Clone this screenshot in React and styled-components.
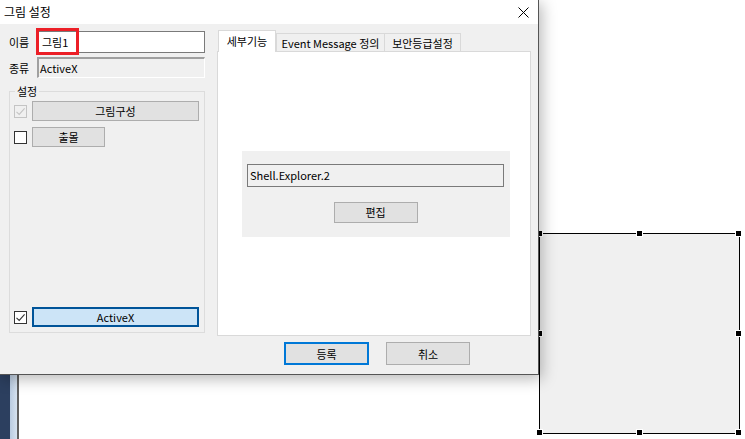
import React from 'react'
import styled, { createGlobalStyle, css } from 'styled-components'

const GlobalStyle = createGlobalStyle`
  html, body {
    margin: 0;
    background: #fff;
  }
  body {
    font-family: "Noto Sans CJK KR", "Noto Sans", sans-serif;
    font-size: 11px;
    color: #000;
  }
`;

const CheckMark = ({ color }) => (
  <svg width="11" height="11" viewBox="0 0 11 11">
    <path d="M1.5 5.8 L4.2 8.4 L9.6 2.4" fill="none" stroke={color} strokeWidth="1.1" />
  </svg>
);

const CloseIcon = () => (
  <svg width="11" height="11" viewBox="0 0 11 11">
    <path d="M0.5 0.5 L10.5 10.5 M10.5 0.5 L0.5 10.5" stroke="#000" strokeWidth="1" />
  </svg>
);

const CheckBox = ({ checked, disabled }) => (
  <Box $disabled={disabled}>
    {checked && <CheckMark color={disabled ? '#c4c4c4' : '#333'} />}
  </Box>
);

const handles = [
  [0, 0], [50, 0], [100, 0],
  [0, 50], [100, 50],
  [0, 100], [50, 100], [100, 100],
];

const App = () => {
  return (
    <>
      <GlobalStyle />
      <Desktop>
        <NavyStrip />
        <BlueEdge />
        <Canvas>
          <Selected>
            {handles.map(([x, y]) => (
              <Handle key={`${x}-${y}`} $x={x} $y={y} />
            ))}
          </Selected>
        </Canvas>

        <Dialog>
          <TitleBar>
            <Title>그림 설정</Title>
            <CloseButton><CloseIcon /></CloseButton>
          </TitleBar>
          <Body>
            <LeftColumn>
              <FieldRow>
                <Label>이름</Label>
                <NameField>
                  <TextBox $h={22}>그림1</TextBox>
                  <Highlight />
                </NameField>
              </FieldRow>
              <FieldRow $top={4}>
                <Label>종류</Label>
                <ReadOnlyBox>ActiveX</ReadOnlyBox>
              </FieldRow>
              <Group>
                <Legend>설정</Legend>
                <GroupBody>
                  <CheckRow>
                    <CheckBox checked disabled />
                    <Button $w={168}>그림구성</Button>
                  </CheckRow>
                  <CheckRow $top={6}>
                    <CheckBox />
                    <Button $w={73}>출몰</Button>
                  </CheckRow>
                  <CheckRow $bottom>
                    <CheckBox checked />
                    <Button $w={168} $variant="selected">ActiveX</Button>
                  </CheckRow>
                </GroupBody>
              </Group>
            </LeftColumn>

            <RightColumn>
              <Tabs>
                <Tab $active $w={58}>세부기능</Tab>
                <Tab $w={109}>Event Message 정의</Tab>
                <Tab $w={77} $joined>보안등급설정</Tab>
              </Tabs>
              <TabPanel>
                <InnerPanel>
                  <ProgBox>Shell.Explorer.2</ProgBox>
                  <Button $w={84} $h={21}>편집</Button>
                </InnerPanel>
              </TabPanel>
            </RightColumn>

            <Footer>
              <Button $w={85} $h={23} $variant="primary">등록</Button>
              <Button $w={84} $h={23}>취소</Button>
            </Footer>
          </Body>
        </Dialog>
      </Desktop>
    </>
  )
};

const Desktop = styled.div`
  position: relative;
  width: 745px;
  height: 439px;
  overflow: hidden;
  display: flex;
`;

const NavyStrip = styled.div`
  width: 10px;
  background: #2c3f5f;
`;

const BlueEdge = styled.div`
  width: 7px;
  background: linear-gradient(90deg, #b9cbe0, #d6e2ef);
  border-right: 2px solid #606060;
`;

const Canvas = styled.div`
  position: relative;
  flex: 1;
  background: #fff;
`;

const Selected = styled.div`
  position: absolute;
  left: 520px;
  top: 233px;
  width: 201px;
  height: 201px;
  box-sizing: border-box;
  border: 1px solid #000;
  background: #f0f0f0;
`;

const Handle = styled.div`
  position: absolute;
  left: ${p => `calc(${p.$x}% - 4px)`};
  top: ${p => `calc(${p.$y}% - 4px)`};
  width: 5px;
  height: 5px;
  background: #000;
  border: 1px solid #fff;
`;

const Dialog = styled.div`
  position: absolute;
  left: -1px;
  top: -1px;
  z-index: 2;
  width: 540px;
  height: 376px;
  box-sizing: border-box;
  border: 1px solid #555;
  background: #f0f0f0;
  box-shadow: 3px 4px 14px rgba(0, 0, 0, 0.28);
  display: flex;
  flex-direction: column;
`;

const TitleBar = styled.div`
  height: 24px;
  background: #fff;
  display: flex;
  align-items: center;
  justify-content: space-between;
  padding: 0 9px 0 4px;
`;

const Title = styled.span`
  font-size: 12px;
  line-height: 14px;
`;

const CloseButton = styled.div`
  display: flex;
  align-items: center;
`;

const Body = styled.div`
  flex: 1;
  display: grid;
  grid-template-columns: 196px 314px;
  grid-template-rows: auto 1fr;
  column-gap: 12px;
  padding: 0 8px 0 9px;
`;

const LeftColumn = styled.div`
  grid-row: 1 / 3;
  display: flex;
  flex-direction: column;
  padding-top: 7px;
`;

const FieldRow = styled.div`
  display: flex;
  align-items: center;
  margin-top: ${p => p.$top || 0}px;
`;

const Label = styled.span`
  width: 28px;
  line-height: 14px;
`;

const NameField = styled.div`
  position: relative;
  flex: 1;
`;

const TextBox = styled.div`
  height: ${p => p.$h}px;
  box-sizing: border-box;
  border: 1px solid #7a7a7a;
  background: #fff;
  padding: 0 4px;
  display: flex;
  align-items: center;
`;

const Highlight = styled.div`
  position: absolute;
  left: -1px;
  top: -3px;
  width: 43px;
  height: 27px;
  box-sizing: border-box;
  border: 3px solid #ec1f27;
`;

const ReadOnlyBox = styled.div`
  flex: 1;
  height: 21px;
  box-sizing: border-box;
  border-top: 2px solid #a0a0a0;
  border-left: 2px solid #a0a0a0;
  border-right: 1px solid #fff;
  border-bottom: 1px solid #fff;
  background: #f0f0f0;
  padding: 0 1px;
  display: flex;
  align-items: center;
`;

const Group = styled.fieldset`
  margin: 6px 0 0;
  padding: 3px 5px 5px 4px;
  height: 249px;
  box-sizing: border-box;
  border: 1px solid #dcdcdc;
  min-width: 0;
`;

const Legend = styled.legend`
  padding: 0 2px;
  margin-left: 1px;
  line-height: 14px;
`;

const GroupBody = styled.div`
  height: 226px;
  display: flex;
  flex-direction: column;
`;

const CheckRow = styled.div`
  display: flex;
  align-items: center;
  gap: 5px;
  margin-top: ${p => (p.$bottom ? 'auto' : `${p.$top || 0}px`)};
`;

const Box = styled.div`
  width: 13px;
  height: 13px;
  box-sizing: border-box;
  border: 1px solid ${p => (p.$disabled ? '#c4c4c4' : '#333')};
  background: ${p => (p.$disabled ? '#f0f0f0' : '#fff')};
  display: flex;
  align-items: center;
  justify-content: center;
`;

const Button = styled.div`
  width: ${p => p.$w}px;
  height: ${p => p.$h || 20}px;
  box-sizing: border-box;
  border: 1px solid #adadad;
  background: #e1e1e1;
  display: flex;
  align-items: center;
  justify-content: center;
  line-height: 14px;
  ${p => p.$variant === 'primary' && css`
    border: 2px solid #0078d7;
  `}
  ${p => p.$variant === 'selected' && css`
    border: 2px solid #005499;
    background: #cce4f7;
  `}
`;

const RightColumn = styled.div`
  display: flex;
  flex-direction: column;
  padding-top: 6px;
`;

const Tabs = styled.div`
  height: 21px;
  display: flex;
  align-items: flex-end;
  padding-left: 1px;
  position: relative;
  z-index: 1;
`;

const Tab = styled.div`
  width: ${p => p.$w}px;
  height: 18px;
  box-sizing: border-box;
  border: 1px solid #d9d9d9;
  border-bottom: none;
  background: #f0f0f0;
  display: flex;
  align-items: center;
  justify-content: center;
  white-space: nowrap;
  line-height: 14px;
  ${p => p.$joined && css`margin-left: -1px;`}
  ${p => p.$active && css`
    height: 22px;
    margin-bottom: -1px;
    background: #fff;
    align-items: flex-start;
    padding-top: 3px;
  `}
`;

const TabPanel = styled.div`
  height: 285px;
  box-sizing: border-box;
  border: 1px solid #d9d9d9;
  background: #fff;
  display: flex;
  align-items: center;
  justify-content: center;
  padding-left: 4px;
`;

const InnerPanel = styled.div`
  width: 268px;
  height: 86px;
  box-sizing: border-box;
  background: #f0f0f0;
  padding: 13px 6px 0 5px;
  display: flex;
  flex-direction: column;
  align-items: center;
  gap: 15px;
`;

const ProgBox = styled.div`
  align-self: stretch;
  height: 23px;
  box-sizing: border-box;
  border: 1px solid #7a7a7a;
  background: #f0f0f0;
  padding: 0 2px;
  display: flex;
  align-items: center;
`;

const Footer = styled.div`
  grid-column: 2;
  display: flex;
  gap: 17px;
  padding: 6px 0 0 67px;
`;

export default App
